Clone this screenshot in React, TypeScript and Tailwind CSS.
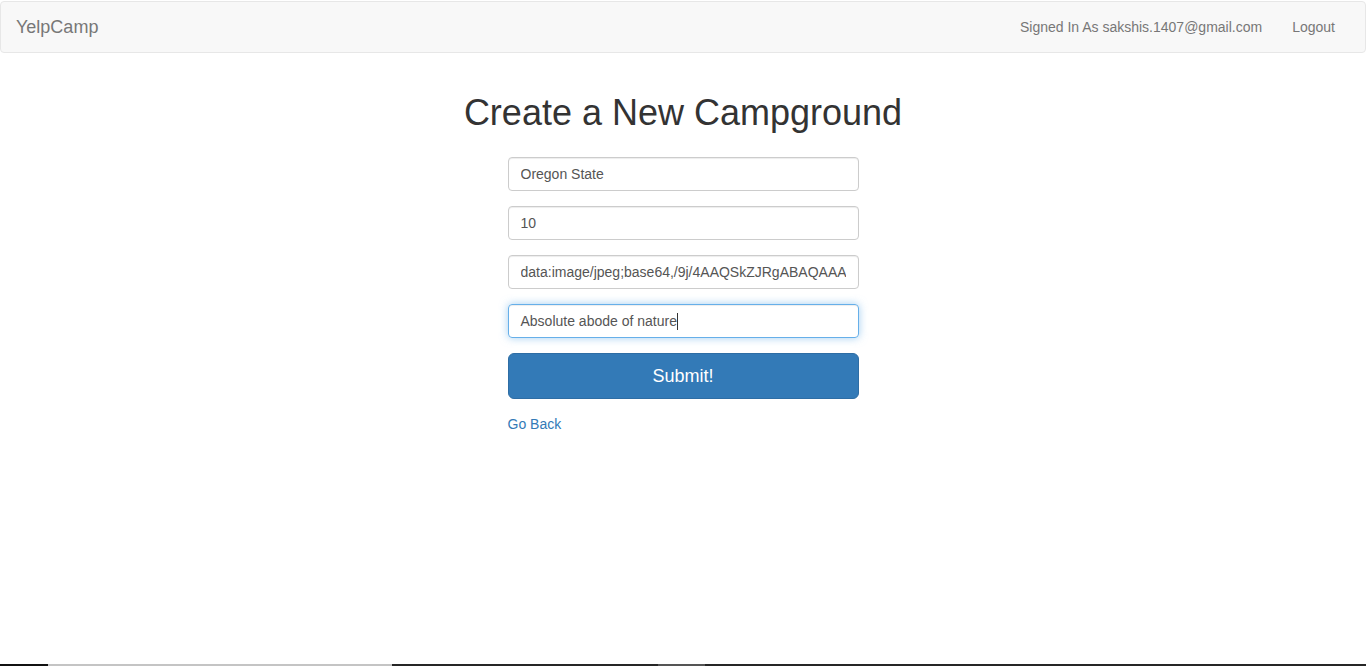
export default function App() {
  return (
    <div
      className="flex flex-col h-[666px] bg-white text-[14px] text-[#333]"
      style={{ fontFamily: '"Liberation Sans", Arial, Helvetica, sans-serif' }}
    >
      <nav className="mt-px flex items-center justify-between h-[52px] bg-[#f8f8f8] border border-[#e7e7e7] rounded-[4px] px-[15px]">
        <a className="text-[18px] leading-[20px] text-[#777]">YelpCamp</a>
        <ul className="flex items-center">
          <li>
            <a className="block px-[15px] leading-[20px] text-[#777]">Signed In As sakshis.1407@gmail.com</a>
          </li>
          <li>
            <a className="block px-[15px] leading-[20px] text-[#777]">Logout</a>
          </li>
        </ul>
      </nav>

      <main className="flex-1 flex flex-col items-center">
        <h1 className="mt-[40px] text-[36px] leading-[40px] text-[#333]">Create a New Campground</h1>
        <form className="mt-[24px] w-[351px] flex flex-col">
          <input
            className="h-[34px] mb-[15px] px-[12px] border border-[#ccc] rounded-[4px] text-[14px] text-[#555] shadow-[inset_0_1px_1px_rgba(0,0,0,0.075)] outline-none"
            defaultValue="Oregon State"
          />
          <input
            className="h-[34px] mb-[15px] px-[12px] border border-[#ccc] rounded-[4px] text-[14px] text-[#555] shadow-[inset_0_1px_1px_rgba(0,0,0,0.075)] outline-none"
            defaultValue="10"
          />
          <input
            className="h-[34px] mb-[15px] px-[12px] border border-[#ccc] rounded-[4px] text-[14px] text-[#555] shadow-[inset_0_1px_1px_rgba(0,0,0,0.075)] outline-none"
            defaultValue="data:image/jpeg;base64,/9j/4AAQSkZJRgABAQAAAQABAAD"
          />
          <div className="h-[34px] mb-[15px] px-[12px] flex items-center border border-[#66afe9] rounded-[4px] text-[14px] text-[#555] shadow-[inset_0_1px_1px_rgba(0,0,0,0.075),0_0_8px_rgba(102,175,233,0.6)]">
            <span>Absolute abode of nature</span>
            <span className="w-px h-[17px] bg-[#333]" />
          </div>
          <button
            type="button"
            className="h-[46px] mb-[15px] bg-[#337ab7] border border-[#2e6da4] rounded-[6px] text-white text-[18px]"
          >
            Submit!
          </button>
          <a className="leading-[20px] text-[#337ab7]">Go Back</a>
        </form>
      </main>

      <div className="flex h-[2px]">
        <div className="w-[48px] bg-[#111]" />
        <div className="w-[344px] bg-[#c4c4c4]" />
        <div className="w-[266px] bg-[#262626]" />
        <div className="w-[47px] bg-[#555]" />
        <div className="flex-1 bg-[#262626]" />
      </div>
    </div>
  );
}
